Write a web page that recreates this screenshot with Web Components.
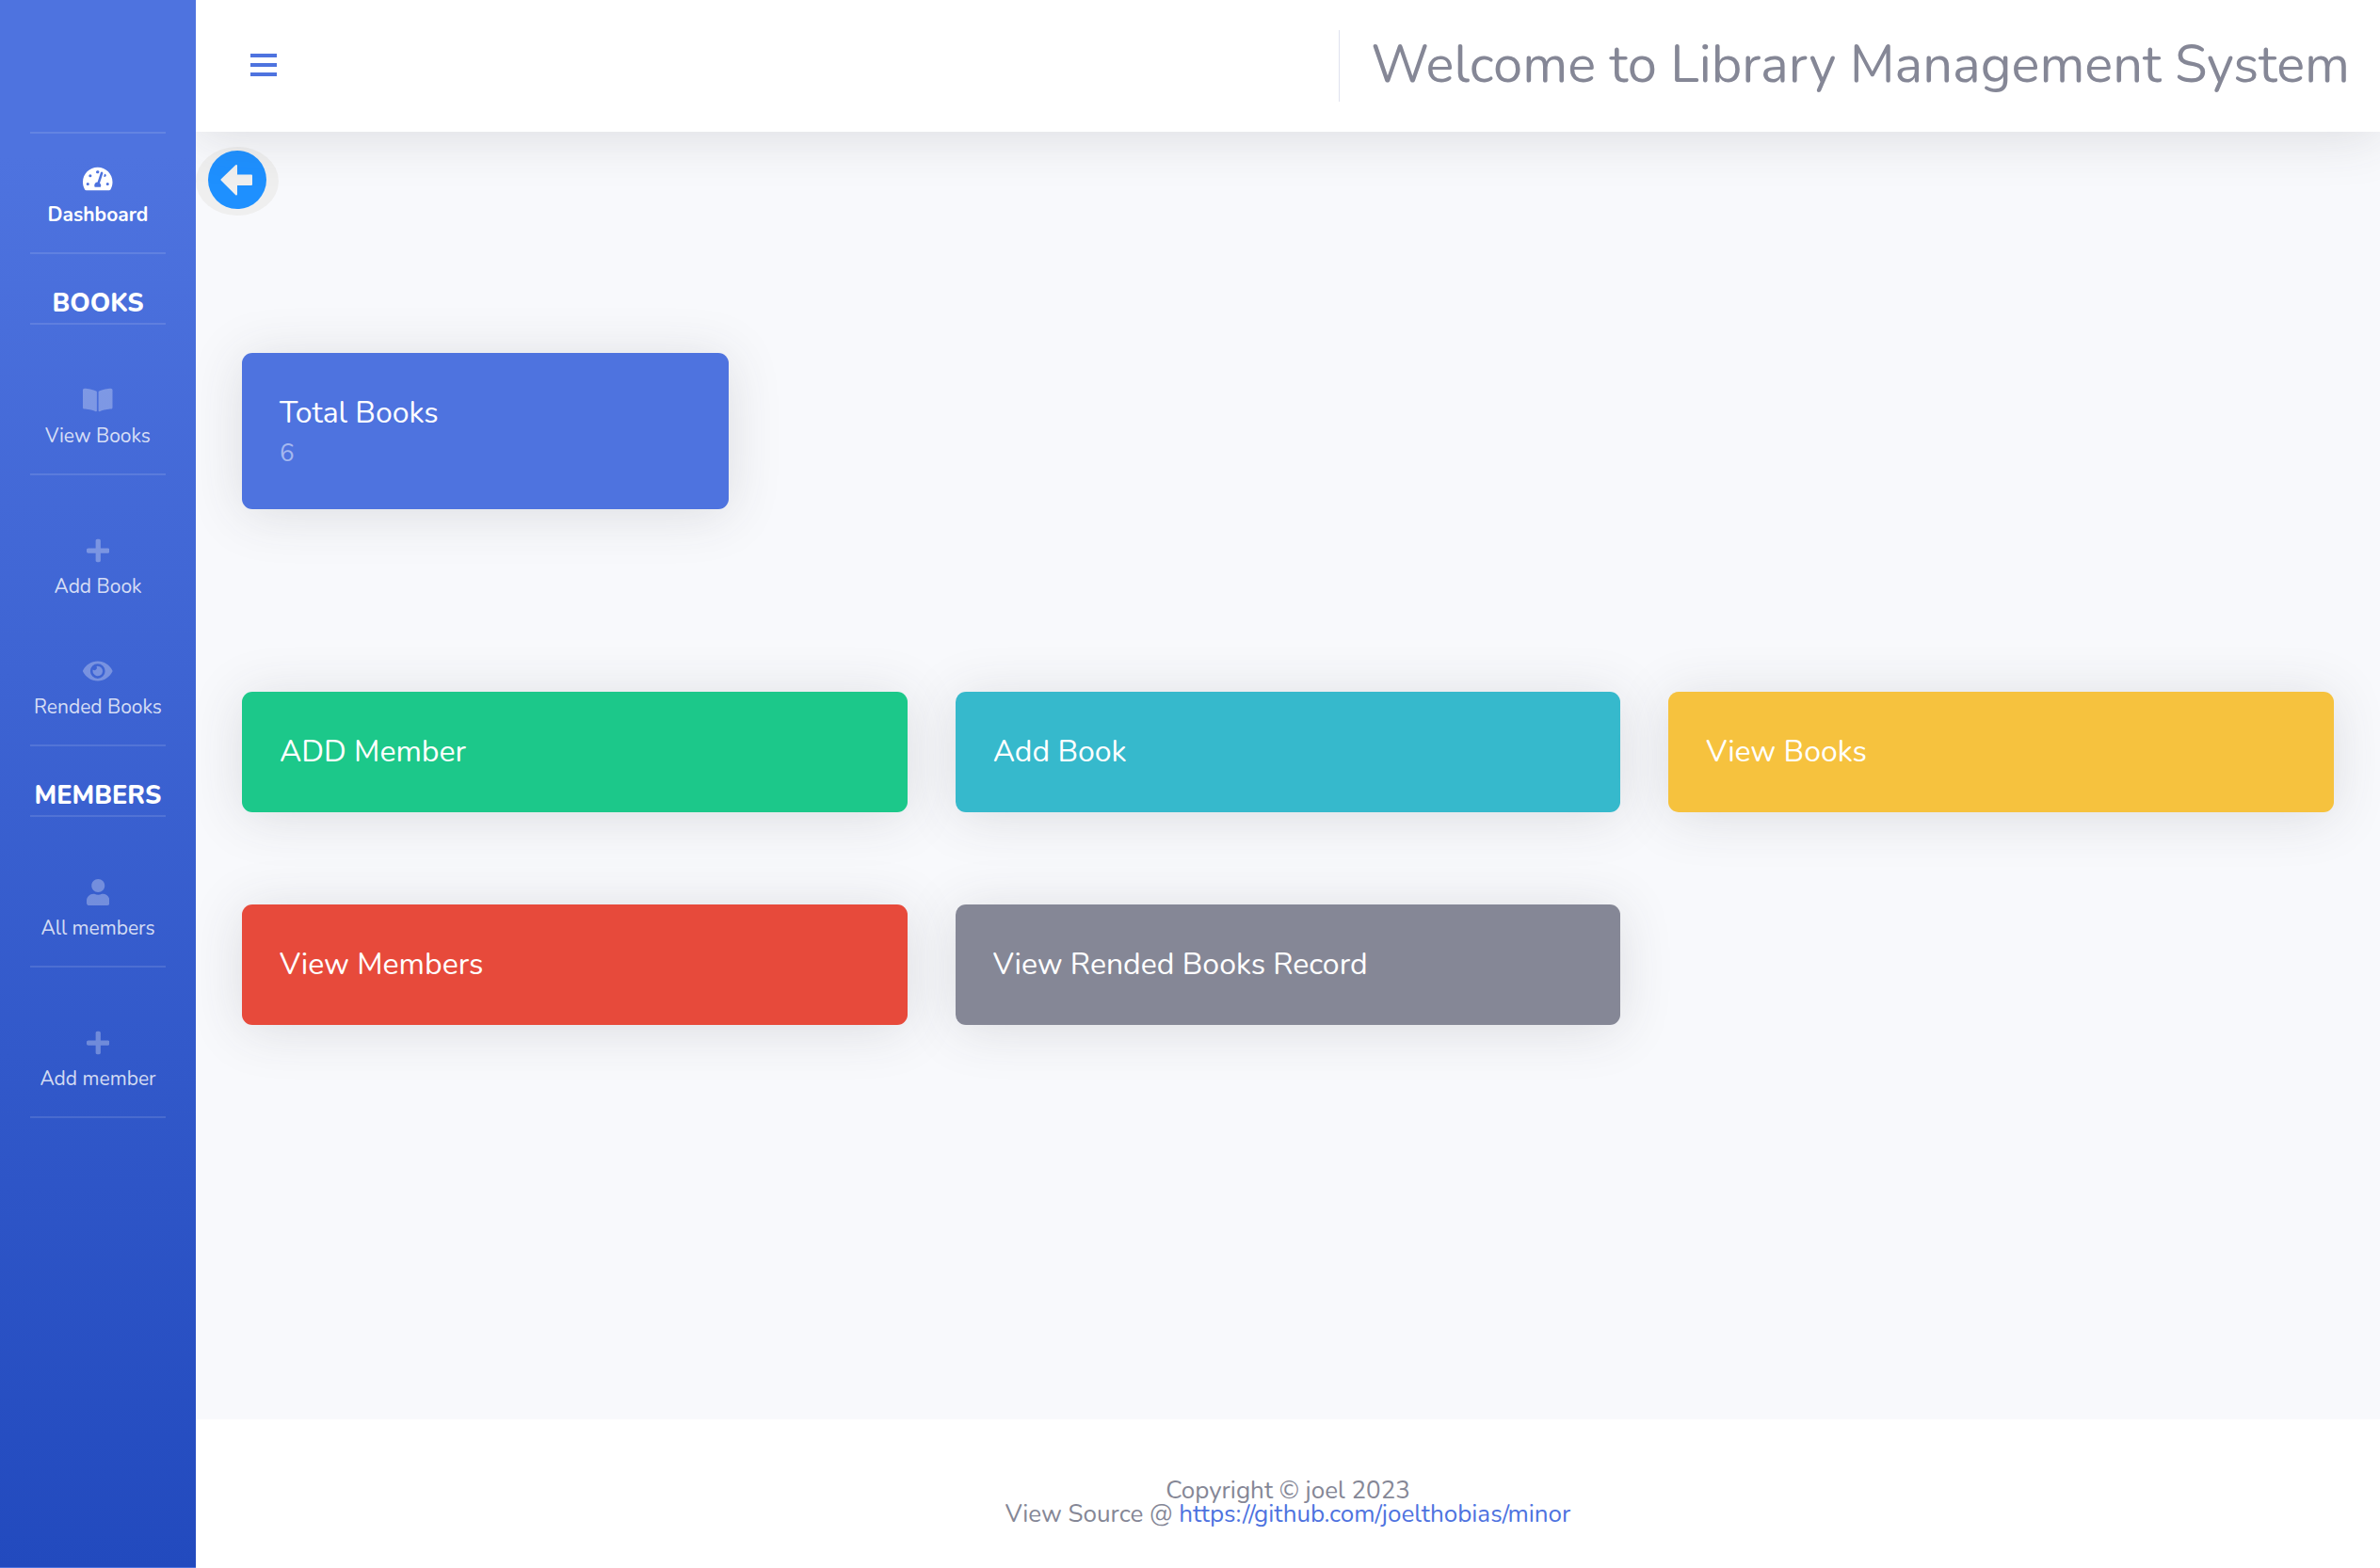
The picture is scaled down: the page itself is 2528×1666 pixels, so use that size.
<!DOCTYPE html>
<html lang="en">
<head>
<meta charset="utf-8">
<title>Library Management System</title>
<style>
  html, body { margin: 0; }
  body { font-family: Nunito, "Open Sans", sans-serif; color: #858796; background: #f8f9fc; }
  nav-item + nav-item { margin-top: 2px; }
</style>
</head>
<body>
<library-app>
  <side-nav slot="nav">
    <nav-divider></nav-divider>
    <nav-item icon="gauge" active>Dashboard</nav-item>
    <nav-divider></nav-divider>
    <nav-heading>BOOKS</nav-heading>
    <nav-divider spaced></nav-divider>
    <nav-item icon="book">View Books</nav-item>
    <nav-divider spaced></nav-divider>
    <nav-item icon="plus">Add Book</nav-item>
    <nav-item icon="eye">Rended Books</nav-item>
    <nav-divider></nav-divider>
    <nav-heading>MEMBERS</nav-heading>
    <nav-divider spaced></nav-divider>
    <nav-item icon="user">All members</nav-item>
    <nav-divider spaced></nav-divider>
    <nav-item icon="plus">Add member</nav-item>
    <nav-divider></nav-divider>
  </side-nav>
  <top-bar slot="top">Welcome to Library Management System</top-bar>
  <back-button></back-button>
  <card-grid columns="4" class="summary">
    <stat-card tone="primary" value="6">Total Books</stat-card>
  </card-grid>
  <card-grid columns="3">
    <stat-card tone="success">ADD Member</stat-card>
    <stat-card tone="info">Add Book</stat-card>
    <stat-card tone="warning">View Books</stat-card>
    <stat-card tone="danger">View Members</stat-card>
    <stat-card tone="secondary">View Rended Books Record</stat-card>
  </card-grid>
  <page-footer slot="foot"></page-footer>
</library-app>

<script>
const ICONS = {
  gauge: ['0 0 576 512', 'M288 32C129 32 0 161 0 320c0 53 14 102 39 145 6 9 16 15 27 15h444c11 0 21-6 27-15 25-43 39-92 39-145C576 161 447 32 288 32zm0 64c15 0 27 10 31 24l-7 21c-6 7-14 11-24 11-18 0-32-10-32-28s14-28 32-28zM96 384a28 28 0 1 1 0-57 28 28 0 0 1 0 57zm48-160a28 28 0 1 1 0-57 28 28 0 0 1 0 57zm246-72-61 184c13 12 23 29 23 48 0 12-3 22-9 32H233c-6-10-9-20-9-32 0-34 27-62 61-64l60-183c4-12 18-19 30-15 13 4 19 18 15 30zm15 57 16-47a28 28 0 1 1-16 47zm75 175a28 28 0 1 1 0-57 28 28 0 0 1 0 57z'],
  book: ['0 0 576 512', 'M542 32c-54 3-164 15-231 56-5 3-7 8-7 13v364c0 11 12 18 23 13 69-35 170-44 219-47 17-1 30-14 30-30V62c0-17-15-31-34-30zM265 88C197 47 88 35 34 32 15 31 0 45 0 62v339c0 16 13 29 30 30 49 3 150 12 219 47 11 5 23-2 23-13V101c0-5-2-10-7-13z'],
  plus: ['0 0 448 512', 'M416 208H272V64c0-18-14-32-32-32h-32c-18 0-32 14-32 32v144H32c-18 0-32 14-32 32v32c0 18 14 32 32 32h144v144c0 18 14 32 32 32h32c18 0 32-14 32-32V304h144c18 0 32-14 32-32v-32c0-18-14-32-32-32z'],
  eye: ['0 0 576 512', 'M572.5 241.4C518.3 135.6 410.9 64 288 64S57.700 135.600 3.500 241.400a32.400 32.400 0 0 0 0 29.200C57.700 376.400 165.100 448 288 448s230.300-71.600 284.500-177.400a32.400 32.400 0 0 0 0-29.200zM288 400a144 144 0 1 1 144-144 143.900 143.900 0 0 1-144 144zm0-240a95.300 95.300 0 0 0-25.300 3.800 47.900 47.900 0 0 1-66.900 66.900A95.800 95.800 0 1 0 288 160z'],
  user: ['0 0 448 512', 'M224 256c71 0 128-57 128-128S295 0 224 0 96 57 96 128s57 128 128 128zm90 32h-17a174 174 0 0 1-146 0h-17C60 288 0 348 0 422v42c0 27 21 48 48 48h352c27 0 48-21 48-48v-42c0-74-60-134-134-134z']
};

const define = (name, render) => customElements.define(name, class extends HTMLElement {
  connectedCallback() {
    if (this.shadowRoot) return;
    const template = document.createElement('template');
    template.innerHTML = render(this);
    this.attachShadow({ mode: 'open' }).append(template.content.cloneNode(true));
  }
});

define('library-app', () => `
  <style>
    :host { display: flex; min-height: 100vh; }
    .column { flex: 1; min-width: 0; display: flex; flex-direction: column; }
    main { flex: 1; }
    ::slotted(card-grid.summary) { margin: 146px 0 194px; }
  </style>
  <slot name="nav"></slot>
  <div class="column">
    <slot name="top"></slot>
    <main><slot></slot></main>
    <slot name="foot"></slot>
  </div>`);

define('side-nav', () => `
  <style>
    :host { display: block; position: relative; z-index: 2; flex: none; width: 208px;
      background: linear-gradient(180deg, #4e73df 10%, #224abe 100%); border-bottom: 1px solid #4e73df; }
    nav { padding-top: 140px; }
  </style>
  <nav><slot></slot></nav>`);

define('nav-divider', () => `
  <style>
    :host { display: block; height: 2px; margin: 0 32px; background: rgba(255, 255, 255, .12); }
    :host([spaced]) { margin-bottom: 32px; }
  </style>`);

define('nav-heading', () => `
  <style>
    :host { display: block; padding: 32px 0 0; text-align: center; color: #fff; }
    h2 { margin: 0; font-size: 27px; line-height: 41px; font-weight: 800; }
  </style>
  <h2><slot></slot></h2>`);

define('nav-item', el => {
  const [box, path] = ICONS[el.getAttribute('icon')];
  return `
  <style>
    :host { display: block; }
    a { display: flex; flex-direction: column; align-items: center; padding: 26px 0 24px;
      text-decoration: none; font-size: 21px; line-height: 32px; color: rgba(255, 255, 255, .8); }
    .icon { display: flex; align-items: center; height: 44px; color: rgba(255, 255, 255, .3); }
    svg { height: 28px; fill: currentColor; }
    :host([active]) a { color: #fff; font-weight: 700; }
    :host([active]) .icon { color: #fff; }
  </style>
  <a href="#"><span class="icon"><svg viewBox="${box}" aria-hidden="true"><path fill-rule="evenodd" d="${path}"/></svg></span><span><slot></slot></span></a>`;
});

define('top-bar', () => `
  <style>
    :host { display: block; position: relative; z-index: 1; background: #fff;
      box-shadow: 0 5px 56px rgba(58, 59, 69, .15); }
    header { display: flex; align-items: center; justify-content: space-between;
      height: 140px; padding: 0 32px; }
    button { display: flex; padding: 24px; margin: 0; border: 0; background: none; color: #4e73df; }
    svg { width: 32px; height: 28px; fill: currentColor; }
    .title { padding: 3px 0 5px 33px; border-left: 1px solid #dfe2ee; }
    h1 { margin: 0; font-size: 56px; line-height: 68px; font-weight: 400; }
  </style>
  <header>
    <button type="button" aria-label="Toggle menu"><svg viewBox="0 0 32 28" aria-hidden="true"><path d="M2 1h28v4H2zM2 11h28v4H2zM2 21h28v4H2z"/></svg></button>
    <div class="title"><h1><slot></slot></h1></div>
  </header>`);

define('back-button', () => `
  <style>
    :host { display: flex; padding-top: 16px; }
    button { display: flex; align-items: center; padding: 4px 13px 7px; border: 0;
      border-radius: 50%; background: #efefef; }
    svg { width: 62px; height: 62px; }
  </style>
  <button type="button" aria-label="Back"><svg viewBox="0 0 62 62" aria-hidden="true"><circle cx="31" cy="31" r="31" fill="#1e90ff"/><path fill="#efefef" stroke="#efefef" stroke-width="2" stroke-linejoin="round" d="M14.500 31 30 16v10.500h16v9.500H30v10.500z"/></svg></button>`);

define('card-grid', el => `
  <style>
    :host { display: grid; grid-template-columns: repeat(${el.getAttribute('columns')}, 1fr);
      gap: 98px 51px; padding: 0 49px; }
  </style>
  <slot></slot>`);

const TONES = { primary: '#4e73df', success: '#1cc88a', info: '#36b9cc', warning: '#f6c23e', danger: '#e74a3b', secondary: '#858796' };

define('stat-card', el => {
  const value = el.getAttribute('value');
  return `
  <style>
    :host { display: block; padding: 40px; border-radius: 11px; color: #fff; font-size: 32px;
      line-height: 48px; background: ${TONES[el.getAttribute('tone')]};
      box-shadow: 0 5px 56px rgba(58, 59, 69, .15); }
    .value { font-size: 26px; line-height: 38px; color: rgba(255, 255, 255, .5); }
  </style>
  <slot></slot>${value ? `<div class="value">${value}</div>` : ''}`;
});

define('page-footer', () => `
  <style>
    :host { display: block; padding: 63px 0 45px; background: #fff; text-align: center;
      font-size: 26px; line-height: 25px; }
    a { color: #4e73df; text-decoration: none; }
  </style>
  <footer><div>Copyright © joel 2023</div><div>View Source @ <a href="#">https://github.com/joelthobias/minor</a></div></footer>`);
</script>
</body>
</html>
